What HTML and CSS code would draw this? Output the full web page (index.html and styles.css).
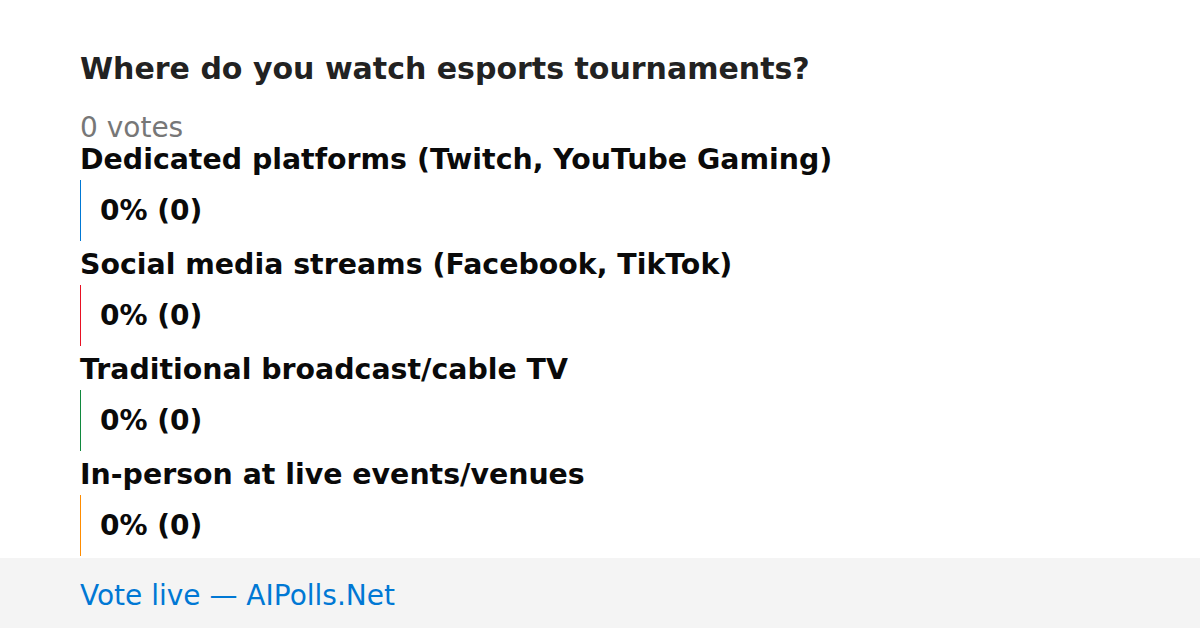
FILE: index.html
```html
<!DOCTYPE html>
<html>
<head>
	<meta charset="utf-8">
	<title>Poll</title>
	<link rel="stylesheet" href="styles.css">
</head>
<body>

<main class='poll'>
	<h1 class='question'>Where do you watch esports tournaments?</h1>
	<p class='total'>0 votes</p>

	<div class='option'>
		<div class='label'>Dedicated platforms (Twitch, YouTube Gaming)</div>
		<div class='bar blue'>0% (0)</div>
	</div>

	<div class='option'>
		<div class='label'>Social media streams (Facebook, TikTok)</div>
		<div class='bar red'>0% (0)</div>
	</div>

	<div class='option'>
		<div class='label'>Traditional broadcast/cable TV</div>
		<div class='bar green'>0% (0)</div>
	</div>

	<div class='option'>
		<div class='label'>In-person at live events/venues</div>
		<div class='bar orange'>0% (0)</div>
	</div>
</main>

<footer class='footer'>
	<a href='#'>Vote live — AIPolls.Net</a>
</footer>

</body>
</html>
```

FILE: styles.css
```css
body {
	margin: 0;
	padding: 0;
	font-family: 'DejaVu Sans', sans-serif;
	background: #fff;
	width: 1200px;
	height: 628px;
	overflow: hidden;
	display: flex;
	flex-direction: column;
}

.poll {
	flex: 1;
	padding: 49px 80px 0;
}

.question {
	margin: 0;
	font-size: 30px;
	line-height: 40px;
	font-weight: bold;
	color: #222;
}

.total {
	margin: 22px 0 0;
	font-size: 28px;
	line-height: 33px;
	color: #777;
}

.label {
	font-size: 28.4px;
	line-height: 32px;
	padding-bottom: 4px;
	font-weight: bold;
	color: #0a0a0a;
}

.option + .option {
	margin-top: 8px;
}

.bar {
	display: flex;
	align-items: center;
	height: 61px;
	padding-left: 19px;
	border-left: 1px solid;
	font-size: 28px;
	font-weight: bold;
	color: #0a0a0a;
}

.blue { border-color: #0078d4; }
.red { border-color: #e81123; }
.green { border-color: #10893e; }
.orange { border-color: #ff8c00; }

.footer {
	height: 70px;
	box-sizing: border-box;
	padding: 4px 80px 0;
	background: #f4f4f4;
	display: flex;
	align-items: center;
}

.footer a {
	font-size: 28px;
	color: #0078d4;
	text-decoration: none;
}
```
